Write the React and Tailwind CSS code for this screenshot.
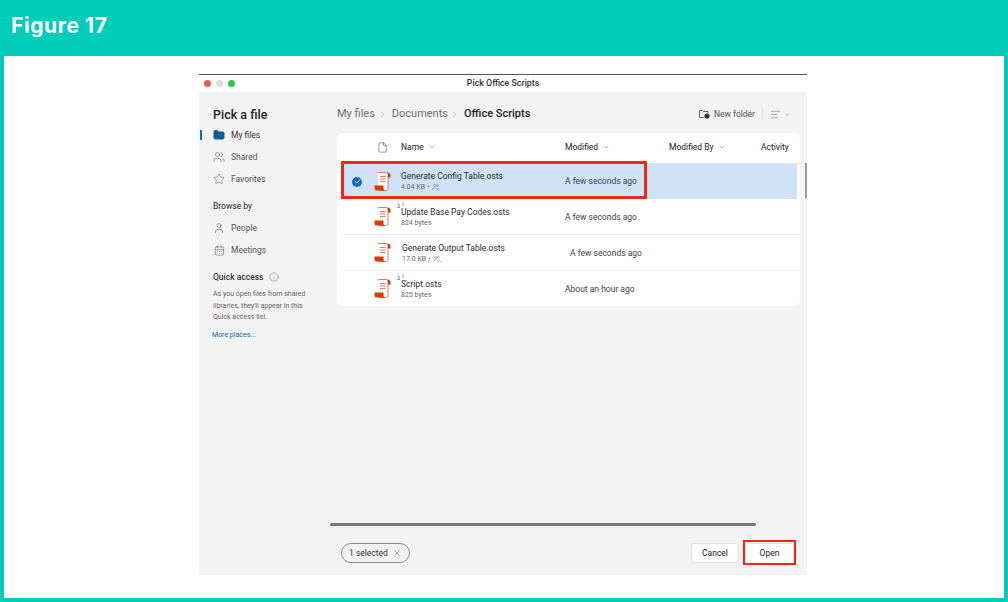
import React from 'react';
import { ChevronDown, ChevronRight, X, Info, Star, User, Users, File, Check, CalendarDays, Folder, AlignLeft } from 'lucide-react';

const files = [
  { name: 'Generate Config Table.osts', size: '4.04 KB', shared: true, modified: 'A few seconds ago', selected: true, h: 'h-[35px]', nameX: 'pl-0', modX: 'pl-0' },
  { name: 'Update Base Pay Codes.osts', size: '824 bytes', syncing: true, modified: 'A few seconds ago', h: 'h-[36px]', nameX: 'pl-0 pt-[2px]', modX: 'pl-0 pt-[2px]' },
  { name: 'Generate Output Table.osts', size: '17.0 KB', shared: true, modified: 'A few seconds ago', h: 'h-[36px]', nameX: 'pl-px pt-[2px]', modX: 'pl-[5px] pt-[2px]' },
  { name: 'Script.osts', size: '825 bytes', syncing: true, modified: 'About an hour ago', h: 'h-[35px]', nameX: 'pl-0 pt-[2px]', modX: 'pl-0 pt-[2px]', last: true },
];

const ScriptIcon = () => (
  <svg width="17" height="19" viewBox="0 0 17 19" className="shrink-0">
    <path d="M3.5 1.5 Q3.5 .5 4.5 .5 H12.5 Q14 .5 14 2 V16.5 Q14 18.5 12 18.5 H5" fill="#fff" stroke="#e8795c" strokeWidth="1" />
    <path d="M13 .5 Q16.5 .5 16.5 3 V5.5 H14 V2" fill="#d83b01" />
    <path d="M.5 13.5 H9.5 V16.5 Q9.5 18.5 11.5 18.5 H2.5 Q.5 18.5 .5 16.5 Z" fill="#d83b01" />
    <path d="M6 4.5 H11.5 M6 7 H11.5 M6 9.5 H11.5" stroke="#e8795c" strokeWidth="1" />
  </svg>
);

const SyncMark = () => (
  <svg width="8" height="7" viewBox="0 0 8 7" className="absolute -left-[4px] -top-[5px]">
    <path d="M.5 1.5 L3 3.5 L.5 5.5 M3 5.5 H.5 M6 .5 V4" fill="none" stroke="#2f8fe0" strokeWidth=".8" />
  </svg>
);

const Row = ({ file }) => (
  <div className={`flex items-center ${file.h} ${file.selected ? 'bg-[#cfe2f8] mr-[3px] ml-[6px]' : 'ml-[6px]'} ${file.selected || file.last ? '' : 'border-b border-[#efefef]'}`}>
    <div className="w-[28px] flex justify-center">
      {file.selected && (
        <span className="w-[10px] h-[10px] rounded-full bg-[#0f6cbd] flex items-center justify-center">
          <Check size={7} color="#fff" strokeWidth={3} />
        </span>
      )}
    </div>
    <div className="w-[22px] flex justify-center"><ScriptIcon /></div>
    <div className={`w-[164px] ml-[8px] ${file.nameX}`}>
      <div className="relative text-[8.5px] leading-[11px] text-[#2b2b2b]">
        {file.syncing && <SyncMark />}
        {file.name}
      </div>
      <div className="flex items-center gap-[2px] text-[7px] leading-[10px] text-[#666]">
        {file.size}
        {file.shared && <><span>•</span><Users size={8} strokeWidth={1.3} /></>}
      </div>
    </div>
    <div className={`text-[8.5px] text-[#424242] ${file.modX}`}>{file.modified}</div>
  </div>
);

const NavItem = ({ icon, label, active }) => (
  <div className="relative flex items-center h-[22px] gap-[6px] text-[8.5px] text-[#555]">
    {active && <span className="absolute -left-[13px] top-[6px] w-[2px] h-[10px] bg-[#0f6cbd]" />}
    <span className="w-[12px] flex justify-center">{icon}</span>
    <span className={active ? 'text-[#333]' : ''}>{label}</span>
  </div>
);

const Sidebar = () => (
  <aside className="w-[131px] shrink-0 pl-[14px] pt-[14px]">
    <h2 className="text-[12.5px] leading-[18px] font-medium text-[#222]">Pick a file</h2>
    <div>
      <NavItem active label="My files" icon={<Folder size={12} fill="#155a9f" color="#155a9f" />} />
      <NavItem label="Shared" icon={<Users size={12} strokeWidth={1.1} color="#555" />} />
      <NavItem label="Favorites" icon={<Star size={12} strokeWidth={1.1} color="#555" />} />
    </div>
    <div className="mt-[9px] h-[14px] text-[8.5px] leading-[14px] text-[#222]">Browse by</div>
    <div className="mt-[4px]">
      <NavItem label="People" icon={<User size={12} strokeWidth={1.1} color="#555" />} />
      <NavItem label="Meetings" icon={<CalendarDays size={11} strokeWidth={1.1} color="#555" />} />
    </div>
    <div className="mt-[9px] flex items-center gap-[5px] h-[14px] text-[8.5px] font-medium text-[#333]">
      Quick access <Info size={10} strokeWidth={1} color="#555" />
    </div>
    <p className="mt-[5px] w-[102px] text-[7px] leading-[11.7px] text-[#666]">
      As you open files from shared libraries, they'll appear in this Quick access list.
    </p>
    <div className="mt-[6px] -ml-px text-[7px] leading-[11px] text-[#1a5fa8]">More places...</div>
  </aside>
);

const Header = () => (
  <div className="flex items-center h-[31px] pb-[2px] border-b border-[#e8e8e8] text-[8.5px] text-[#222]">
    <div className="w-[34px]" />
    <div className="w-[22px] flex justify-center"><File size={11} strokeWidth={1} /></div>
    <div className="w-[164px] ml-[8px] flex items-center gap-[4px]">Name <ChevronDown size={8} strokeWidth={1} /></div>
    <div className="w-[104px] flex items-center gap-[4px]">Modified <ChevronDown size={8} strokeWidth={1} /></div>
    <div className="w-[92px] flex items-center gap-[4px]">Modified By <ChevronDown size={8} strokeWidth={1} /></div>
    <div>Activity</div>
  </div>
);

const Main = () => (
  <main className="flex-1 flex flex-col min-w-0 relative">
    <div className="flex items-center h-[41px] pt-[3px] pl-[7px] pr-[16px]">
      <div className="flex items-center text-[11px] text-[#707070]">
        <span>My files</span>
        <ChevronRight size={9} strokeWidth={1} className="mx-[3px]" />
        <span className="ml-[2px]">Documents</span>
        <ChevronRight size={9} strokeWidth={1} className="ml-[2px] mr-[5px]" />
        <span className="font-medium text-[#262626]">Office Scripts</span>
      </div>
      <div className="ml-auto flex items-center text-[8.5px] text-[#555]">
        <svg width="11" height="10" viewBox="0 0 11 10" className="mr-[4px]">
          <path d="M.5 8.5 V1.5 H3.5 L4.5 2.5 H9 V4 M.5 8.5 H5" fill="none" stroke="#444" strokeWidth=".8" />
          <circle cx="8" cy="7" r="2.6" fill="#333" />
        </svg>
        New folder
        <span className="w-px h-[11px] bg-[#ddd] mx-[7px]" />
        <AlignLeft size={11} strokeWidth={1} />
        <ChevronDown size={7} strokeWidth={1.4} className="ml-[3px]" />
      </div>
    </div>
    <div className="ml-[7px] w-[463px] h-[173px] bg-white rounded-[6px]">
      <Header />
      {files.map((f) => <Row key={f.name} file={f} />)}
    </div>
    <div className="mt-auto flex flex-col">
      <div className="h-[3px] w-[426px] bg-[#777] rounded-full" />
      <div className="flex items-center justify-between h-[49px] pt-[5px] pl-[11px] pr-[13px]">
        <div className="flex items-center gap-[4px] h-[20px] px-[7px] rounded-full border border-[#8a8a8a] text-[8.5px] text-[#333]">
          1 selected <X size={10} strokeWidth={1} />
        </div>
        <div className="flex items-center gap-[6px]">
          <button className="w-[48px] h-[20px] bg-white rounded-[3px] border border-[#e0e0e0] text-[8.5px] text-[#222]">Cancel</button>
          <button className="w-[49px] h-[21px] bg-white rounded-[3px] border border-[#e0e0e0] text-[8.5px] text-[#222]">Open</button>
        </div>
      </div>
    </div>
    {/* annotation boxes drawn over the screenshot */}
    <div className="absolute left-[11px] top-[69px] w-[306px] h-[38px] border-[3px] border-[#f0280f]" />
    <div className="absolute left-[413px] bottom-[10px] w-[53px] h-[25px] border-2 border-[#f0280f]" />
    <div className="absolute right-0 top-[71px] w-[2px] h-[35px] bg-[#999]" />
  </main>
);

export default function App() {
  return (
    <div className="w-[1008px] h-[602px] bg-[#00cdb8] flex flex-col overflow-hidden" style={{ fontFamily: 'Roboto, "Open Sans", sans-serif' }}>
      <header className="h-[56px] flex items-center pl-[11px] pb-[4px] text-[21px] tracking-[0.6px] font-bold text-white" style={{ fontFamily: 'Inter, "Open Sans", sans-serif' }}>
        Figure 17
      </header>
      <div className="flex-1 mx-[4px] mb-[4px] bg-white pt-[18px] pl-[195px]">
        <div className="w-[608px] h-[501px] flex flex-col border-t border-[#555]">
          <div className="relative h-[17px] bg-white flex items-center justify-center text-[8.8px] font-medium text-[#333]">
            <div className="absolute left-[5px] top-[5px] flex gap-[5px]">
              <span className="w-[7px] h-[7px] rounded-full bg-[#f0595a]" />
              <span className="w-[7px] h-[7px] rounded-full bg-[#dcdcdc]" />
              <span className="w-[7px] h-[7px] rounded-full bg-[#2cc840]" />
            </div>
            Pick Office Scripts
          </div>
          <div className="flex-1 flex bg-[#f3f3f3]">
            <Sidebar />
            <Main />
          </div>
        </div>
      </div>
    </div>
  );
}
